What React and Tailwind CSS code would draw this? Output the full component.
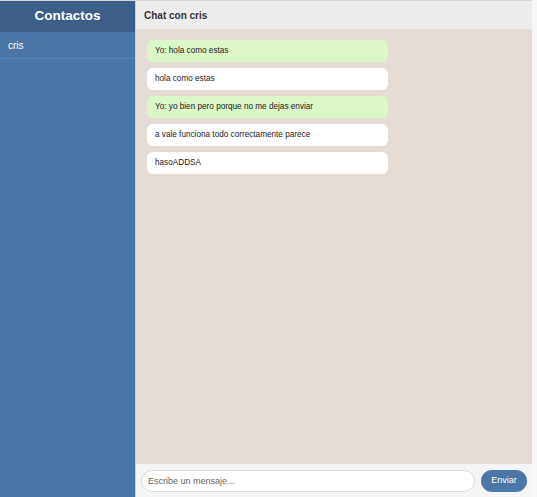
const messages = [
  { id: 1, mine: true, text: 'Yo: hola como estas' },
  { id: 2, mine: false, text: 'hola como estas' },
  { id: 3, mine: true, text: 'Yo: yo bien pero porque no me dejas enviar' },
  { id: 4, mine: false, text: 'a vale funciona todo correctamente parece' },
  { id: 5, mine: false, text: 'hasoADDSA' },
]

export default function App() {
  return (
    <div className="h-[497px] w-[537px] bg-[#f7f7f9] font-['Liberation_Sans',Arial,sans-serif]">
      <div className="flex h-full w-[532px] border-t border-[#d6d6d6]">
        <aside className="flex w-[136px] shrink-0 flex-col bg-[#4a76a8] border-r border-[#c9ccd1]">
          <div className="flex h-[31px] items-center justify-center bg-[#3b5f89] text-[13.5px] font-bold text-white">
            Contactos
          </div>
          <div className="flex h-[27px] items-center border-b border-[#5a84b3] px-[8px] text-[10px] text-white">
            cris
          </div>
        </aside>

        <main className="flex min-w-0 flex-1 flex-col bg-[#e5ddd5]">
          <div className="flex h-[28px] items-center bg-[#ededed] px-[8px] text-[10px] font-bold text-[#333]">
            Chat con cris
          </div>
          <div className="flex flex-1 flex-col gap-[6px] px-[11px] pt-[11px]">
            {messages.map((m) => (
              <div
                key={m.id}
                className={`flex h-[22px] w-[241px] items-center rounded-[6px] px-[8px] text-[8.2px] text-[#222] ${m.mine ? 'bg-[#dcf8c6]' : 'bg-white'}`}
              >
                {m.text}
              </div>
            ))}
          </div>
          <div className="flex h-[33px] items-center gap-[6px] bg-[#f5f5f5] px-[5px]">
            <input
              className="h-[22px] flex-1 rounded-full border border-[#dcdcdc] bg-white px-[6px] text-[9px] text-[#333] placeholder-[#666] focus:outline-none"
              placeholder="Escribe un mensaje..."
            />
            <button className="h-[22px] w-[46px] rounded-full bg-[#4a76a8] text-[9px] text-white">
              Enviar
            </button>
          </div>
        </main>
      </div>
    </div>
  )
}
